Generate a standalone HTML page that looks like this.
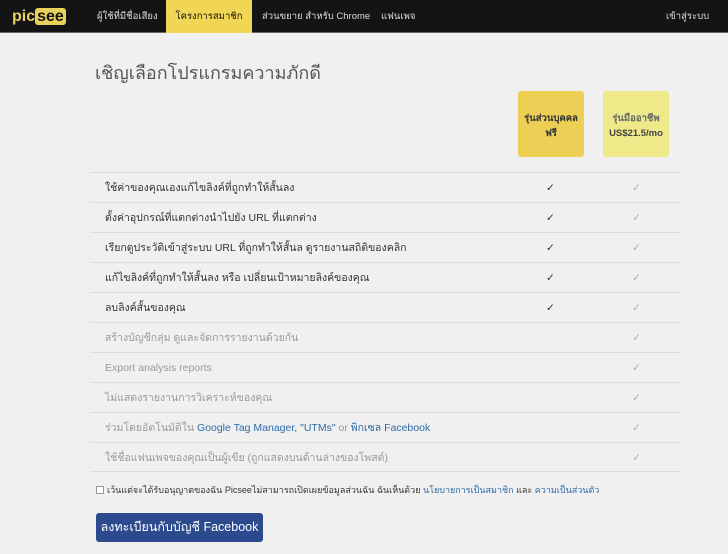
<!DOCTYPE html>
<html><head><meta charset="utf-8"><style>
*{margin:0;padding:0;box-sizing:border-box}
body{width:728px;height:554px;overflow:hidden;background:#f0f0f0;font-family:"Liberation Sans","DejaVu Sans",sans-serif;position:relative;color:#333}
.nav{position:absolute;left:0;top:0;width:728px;height:33px;background:#141316;border-bottom:1px solid #666}
.nav span{position:absolute;top:0;height:33px;line-height:33px;font-size:9.5px;color:#ddd;white-space:nowrap}
.logo{position:absolute;left:12px;top:8px;font-weight:bold;font-size:16px;color:#e8d25a}
.logo b{background:#e8d25a;color:#141316;border-radius:3px;padding:0 2px}
.act{background:#f1d656;color:#111!important}
h1{position:absolute;left:95px;top:58px;font-size:18px;font-weight:normal;color:#555}
.badge{position:absolute;top:91px;width:66px;height:66px;border-radius:3px;font-size:9.5px;font-weight:bold;text-align:center;padding-top:20px;line-height:15px}
.row{position:absolute;left:90px;width:590px;height:30px;border-top:1px solid #ddd;font-size:10.5px;line-height:30px;padding-left:15px}
.row i{position:absolute;font-style:normal;top:0}
.c1{left:456px;color:#333}.c2{left:542px;color:#aaa}
.g{color:#999}
a{color:#2d6aa8;text-decoration:none}
.chk{position:absolute;left:96px;top:483px;font-size:9px;color:#333}
.chk em{display:inline-block;width:8px;height:8px;border:1px solid #999;background:#fff;vertical-align:-1px;margin-right:3px}
.btn{position:absolute;left:96px;top:513px;width:167px;height:29px;background:#2c4a8e;color:#fff;border-radius:3px;font-size:12.5px;line-height:29px;text-align:center}
</style></head><body>
<div class="nav">
<div class="logo">pic<b>see</b></div>
<span style="left:97px">ผู้ใช้ที่มีชื่อเสียง</span>
<span class="act" style="left:166px;width:86px;text-align:center">โครงการสมาชิก</span>
<span style="left:262px">ส่วนขยาย สำหรับ Chrome</span>
<span style="left:381px">แฟนเพจ</span>
<span style="left:666px">เข้าสู่ระบบ</span>
</div>
<h1>เชิญเลือกโปรแกรมความภักดี</h1>
<div class="badge" style="left:518px;background:#edcf55;color:#333">รุ่นส่วนบุคคล<br>ฟรี</div>
<div class="badge" style="left:603px;background:#eeea8a;color:#666">รุ่นมืออาชีพ<br><span style="color:#444">US$21.5/mo</span></div>
<div class="row" style="top:172px">ใช้ค่าของคุณเองแก้ไขลิงค์ที่ถูกทำให้สั้นลง<i class="c1">✓</i><i class="c2">✓</i></div>
<div class="row" style="top:202px">ตั้งค่าอุปกรณ์ที่แตกต่างนำไปยัง URL ที่แตกต่าง<i class="c1">✓</i><i class="c2">✓</i></div>
<div class="row" style="top:232px">เรียกดูประวัติเข้าสู่ระบบ URL ที่ถูกทำให้สั้นล ดูรายงานสถิติของคลิก<i class="c1">✓</i><i class="c2">✓</i></div>
<div class="row" style="top:262px">แก้ไขลิงค์ที่ถูกทำให้สั้นลง หรือ เปลี่ยนเป้าหมายลิงค์ของคุณ<i class="c1">✓</i><i class="c2">✓</i></div>
<div class="row" style="top:292px">ลบลิงค์สั้นของคุณ<i class="c1">✓</i><i class="c2">✓</i></div>
<div class="row g" style="top:322px">สร้างบัญชีกลุ่ม ดูและจัดการรายงานด้วยกัน<i class="c2">✓</i></div>
<div class="row g" style="top:352px">Export analysis reports<i class="c2">✓</i></div>
<div class="row g" style="top:382px">ไม่แสดงรายงานการวิเคราะห์ของคุณ<i class="c2">✓</i></div>
<div class="row g" style="top:412px">ร่วมโดยอัตโนมัติใน <a>Google Tag Manager, "UTMs"</a> or <a>พิกเซล Facebook</a><i class="c2">✓</i></div>
<div class="row g" style="top:442px;border-bottom:1px solid #ddd">ใช้ชื่อแฟนเพจของคุณเป็นผู้เขีย (ถูกแสดงบนด้านล่างของโพสต์)<i class="c2">✓</i></div>
<div class="chk"><em></em>เว้นแต่จะได้รับอนุญาตของฉัน Picseeไม่สามารถเปิดเผยข้อมูลส่วนฉัน ฉันเห็นด้วย <a>นโยบายการเป็นสมาชิก</a> และ <a>ความเป็นส่วนตัว</a></div>
<div class="btn">ลงทะเบียนกับบัญชี Facebook</div>
</body></html>
